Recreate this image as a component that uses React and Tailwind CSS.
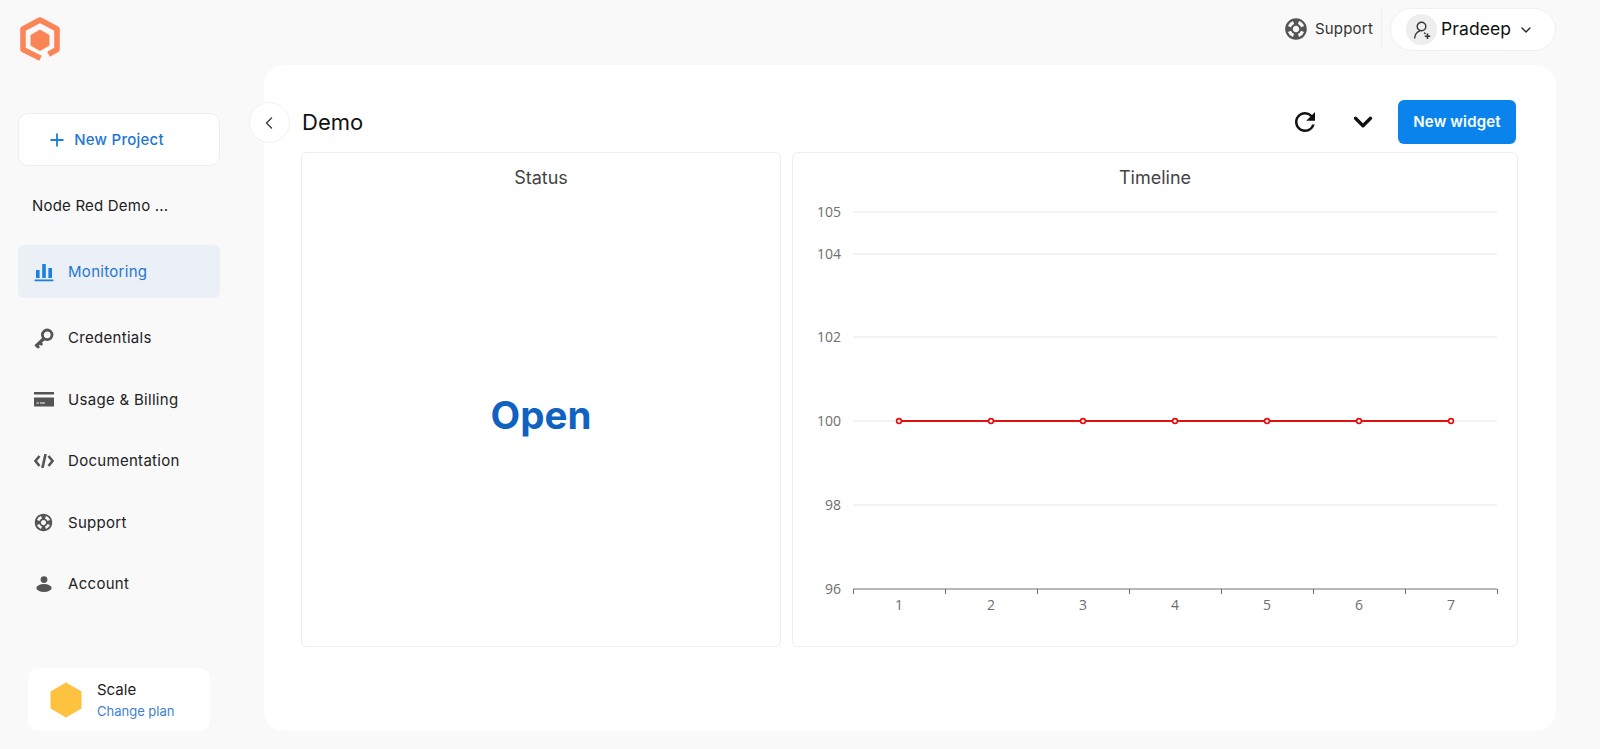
import { ChevronDown, ChevronLeft, Plus } from 'lucide-react'
import { MdRefresh, MdSupport } from 'react-icons/md'

const INTER = { fontFamily: 'Inter, sans-serif' }

// ---------------------------------------------------------------------------
// Icons
// ---------------------------------------------------------------------------
function Logo() {
  return (
    <svg width="40" height="45" viewBox="0 0 40 45" fill="none">
      <path d="M20.5 41.2 L3 32.5 V12 L20 3 L37 12 V32.5 L28.5 37.2" stroke="#fb8557" strokeWidth="5.6" strokeLinejoin="round" />
      <path d="M20 12.5 L29.5 18 V28.5 L20 34 L10.5 28.5 V18 Z" fill="#fb8557" />
    </svg>
  )
}

function BarsIcon() {
  return (
    <svg width="20" height="20" viewBox="0 0 20 20" fill="#1a7fe0">
      <rect x="2" y="8" width="3.6" height="8" rx="0.6" />
      <rect x="8.2" y="2" width="3.6" height="14" rx="0.6" />
      <rect x="14.4" y="6" width="3.6" height="10" rx="0.6" />
      <rect x="0.5" y="17.5" width="19" height="1.8" rx="0.6" />
    </svg>
  )
}

function KeyIcon() {
  return (
    <svg width="20" height="21" viewBox="0 0 20 21" fill="none">
      <circle cx="13.2" cy="6.8" r="4.8" stroke="#555" strokeWidth="2.8" />
      <path d="M10 10.5 L1.5 18.5" stroke="#555" strokeWidth="3.4" />
      <path d="M3 17.5 L5 20 M6 14.8 L8.2 17" stroke="#555" strokeWidth="2.6" />
    </svg>
  )
}

function CardIcon() {
  return (
    <svg width="20" height="15" viewBox="0 0 20 15" fill="#555">
      <rect x="0" y="0" width="20" height="2.5" />
      <path d="M0 5.5 H20 V14.5 H0 Z M2.5 10.5 V11.5 H5 V10.5 Z M6 10.5 V11.5 H11 V10.5 Z" fillRule="evenodd" />
    </svg>
  )
}

function CodeIcon() {
  return (
    <svg width="20" height="14" viewBox="0 0 20 14" fill="none" stroke="#555" strokeWidth="2.6">
      <path d="M5.5 2 L1.5 7 L5.5 12" />
      <path d="M14.5 2 L18.5 7 L14.5 12" />
      <path d="M11.6 0 L8.4 14" />
    </svg>
  )
}

function PersonIcon() {
  return (
    <svg width="16" height="16" viewBox="0 0 16 16" fill="#555">
      <circle cx="8" cy="3.6" r="3.4" />
      <ellipse cx="8" cy="12" rx="7.6" ry="4" />
    </svg>
  )
}

function AddUserIcon() {
  return (
    <svg width="20" height="20" viewBox="0 0 20 20" fill="none" stroke="#333" strokeWidth="1.4">
      <circle cx="9.5" cy="6.5" r="4.3" />
      <path d="M2.5 18.5 C3 14.5 5.5 11.5 8 10.8" />
      <path d="M12 12.8 C12.8 13.2 13.3 13.5 13.6 13.8" />
      <path d="M15.5 13.5 V19 M12.8 16.2 H18.2" strokeWidth="1.6" />
    </svg>
  )
}

// ---------------------------------------------------------------------------
// Sidebar
// ---------------------------------------------------------------------------
const NAV_ITEMS = [
  { label: 'Credentials', icon: <KeyIcon /> },
  { label: 'Usage & Billing', icon: <CardIcon /> },
  { label: 'Documentation', icon: <CodeIcon /> },
  { label: 'Support', icon: <MdSupport size={21} color="#555" /> },
  { label: 'Account', icon: <PersonIcon /> },
]

function Sidebar() {
  return (
    <aside className="flex w-[264px] shrink-0 flex-col pl-[18px]">
      <div className="pl-[2px] pt-[17px]">
        <Logo />
      </div>

      <button className="mt-[51px] flex h-[53px] w-[202px] items-center justify-center gap-[7px] rounded-[10px] border border-[#eeeeee] bg-white pr-[27px] pt-px text-[15px] font-medium tracking-[0.25px] text-[#1f76d2]">
        <Plus size={20} strokeWidth={2.2} className="text-[#1a7fe0]" />
        New Project
      </button>

      <p className="mt-[29px] pl-[14px] text-[15px] leading-[22px] tracking-[0.2px] text-[#1d1d1d]">Node Red Demo ...</p>

      <div className="mt-[28px] flex h-[53px] w-[202px] items-center gap-[14px] rounded-[6px] bg-[#ebf0f7] pl-[16px] pt-px text-[15px] font-normal tracking-[0.3px] text-[#1f76d2]">
        <BarsIcon />
        Monitoring
      </div>

      <nav className="mt-[9.5px] flex flex-col">
        {NAV_ITEMS.map(item => (
          <div key={item.label} className="flex h-[61.5px] items-center text-[15px] tracking-[0.3px] text-[#222222]">
            <span className="flex w-[50px] justify-center pl-[1px]">{item.icon}</span>
            {item.label}
          </div>
        ))}
      </nav>

      <div className="mb-[18px] ml-[10px] mt-auto flex h-[63px] w-[182px] items-center gap-[15px] rounded-[10px] bg-white pl-[22px]">
        <svg width="32" height="36" viewBox="0 0 32 36">
          <path d="M16 0.5 L31.5 9.5 V26.5 L16 35.5 L0.5 26.5 V9.5 Z" fill="#fdc240" />
        </svg>
        <div>
          <p className="text-[15px] leading-[20px] text-[#1b1b1b]">Scale</p>
          <p className="mt-[2px] text-[13px] leading-[18px] text-[#3f7fd1]">Change plan</p>
        </div>
      </div>
    </aside>
  )
}

// ---------------------------------------------------------------------------
// Timeline chart
// ---------------------------------------------------------------------------
const Y_TICKS = [
  { label: '105', y: 212 },
  { label: '104', y: 254 },
  { label: '102', y: 337 },
  { label: '100', y: 421 },
  { label: '98', y: 505 },
]
const POINTS = [1, 2, 3, 4, 5, 6, 7]
const CHART_TOP = 153
const CHART_LEFT = 793

function TimelineChart() {
  const labelFont = { fontFamily: '"Open Sans", sans-serif', fontSize: 14, fill: '#6e6e6e' }
  return (
    <svg width="725" height="494" viewBox={`${CHART_LEFT} ${CHART_TOP} 725 494`} className="absolute left-0 top-0">
      {Y_TICKS.map(t => (
        <g key={t.label}>
          <line x1="853" x2="1497" y1={t.y} y2={t.y} stroke="#e6e8ee" strokeWidth="1.2" />
          <text x="841" y={t.y + 5} textAnchor="end" style={labelFont}>{t.label}</text>
        </g>
      ))}
      <text x="841" y="594" textAnchor="end" style={labelFont}>96</text>
      <line x1="853" x2="1497" y1="589" y2="589" stroke="#6e7079" strokeWidth="1.2" />
      {[0, 1, 2, 3, 4, 5, 6, 7].map(i => (
        <line key={i} x1={853.5 + i * 92} x2={853.5 + i * 92} y1="589" y2="594" stroke="#6e7079" />
      ))}
      {POINTS.map((n, i) => (
        <text key={n} x={899 + i * 92} y="610" textAnchor="middle" style={labelFont}>{n}</text>
      ))}
      <line x1="899" x2={899 + 6 * 92} y1="421" y2="421" stroke="#e30f0f" strokeWidth="2" />
      {POINTS.map((n, i) => (
        <circle key={n} cx={899 + i * 92} cy="421" r="2.4" fill="#fff" stroke="#e30f0f" strokeWidth="1.6" />
      ))}
    </svg>
  )
}

// ---------------------------------------------------------------------------
// Main
// ---------------------------------------------------------------------------
export default function App() {
  return (
    <div className="flex h-[749px] w-[1600px] overflow-hidden bg-[#f9f9f9]" style={INTER}>
      <Sidebar />

      <main className="flex flex-1 flex-col">
        <header className="flex h-[65px] items-start justify-end pr-[44px] pt-[8px]">
          <div className="mt-[8px] flex items-center gap-[6px] text-[15px] tracking-[0.2px] text-[#333333]">
            <MdSupport size={26} color="#555" />
            Support
          </div>
          <div className="ml-[8px] h-[40px] w-px bg-[#eeeeee]" />
          <div className="ml-[8px] flex h-[43px] w-[166px] items-center rounded-full border border-[#f0f0f0] bg-white pl-[15px]">
            <span className="flex h-[31px] w-[31px] items-center justify-center rounded-full bg-[#eeeeee]">
              <AddUserIcon />
            </span>
            <span className="ml-[4px] text-[17.5px] font-normal tracking-[0.1px] text-[#111111]">Pradeep</span>
            <ChevronDown size={16} strokeWidth={2} className="ml-[7px] text-[#222222]" />
          </div>
        </header>

        <section className="relative h-[666px] w-[1292px] rounded-[20px] bg-white pl-[37px] pr-[38px]">
          <button className="absolute left-[-15px] top-[37px] flex h-[41px] w-[41px] items-center justify-center rounded-full border border-[#f0f0f0] bg-white pr-[2px]">
            <ChevronLeft size={20} strokeWidth={1.8} className="text-[#444444]" />
          </button>

          <div className="flex h-[87px] items-center pr-[2px] pt-[27px]">
            <h1 className="ml-px text-[22px] font-normal text-[#111111]">Demo</h1>
            <button className="ml-auto"><MdRefresh size={30} color="#111111" /></button>
            <button className="ml-[28px]"><ChevronDown size={30} strokeWidth={2.6} className="text-[#111111]" /></button>
            <button className="ml-[20px] h-[44px] w-[118px] rounded-[6px] bg-[#0a84ec] text-[15px] font-semibold tracking-[0.15px] text-white">New widget</button>
          </div>

          <div className="flex gap-[11px]">
            <div className="flex h-[495px] w-[480px] shrink-0 flex-col items-center rounded-[6px] border border-[#eeeeee] pt-[11px]">
              <h2 className="text-[18px] font-normal text-[#444444]">Status</h2>
              <div className="flex flex-1 items-center pb-[6px] text-[38.5px] font-bold text-[#0f62c0]">Open</div>
            </div>
            <div className="relative h-[495px] w-[726px] shrink-0 rounded-[6px] border border-[#eeeeee] pt-[11px] text-center">
              <h2 className="text-[18px] font-normal text-[#444444]">Timeline</h2>
              <TimelineChart />
            </div>
          </div>
        </section>
      </main>
    </div>
  )
}
